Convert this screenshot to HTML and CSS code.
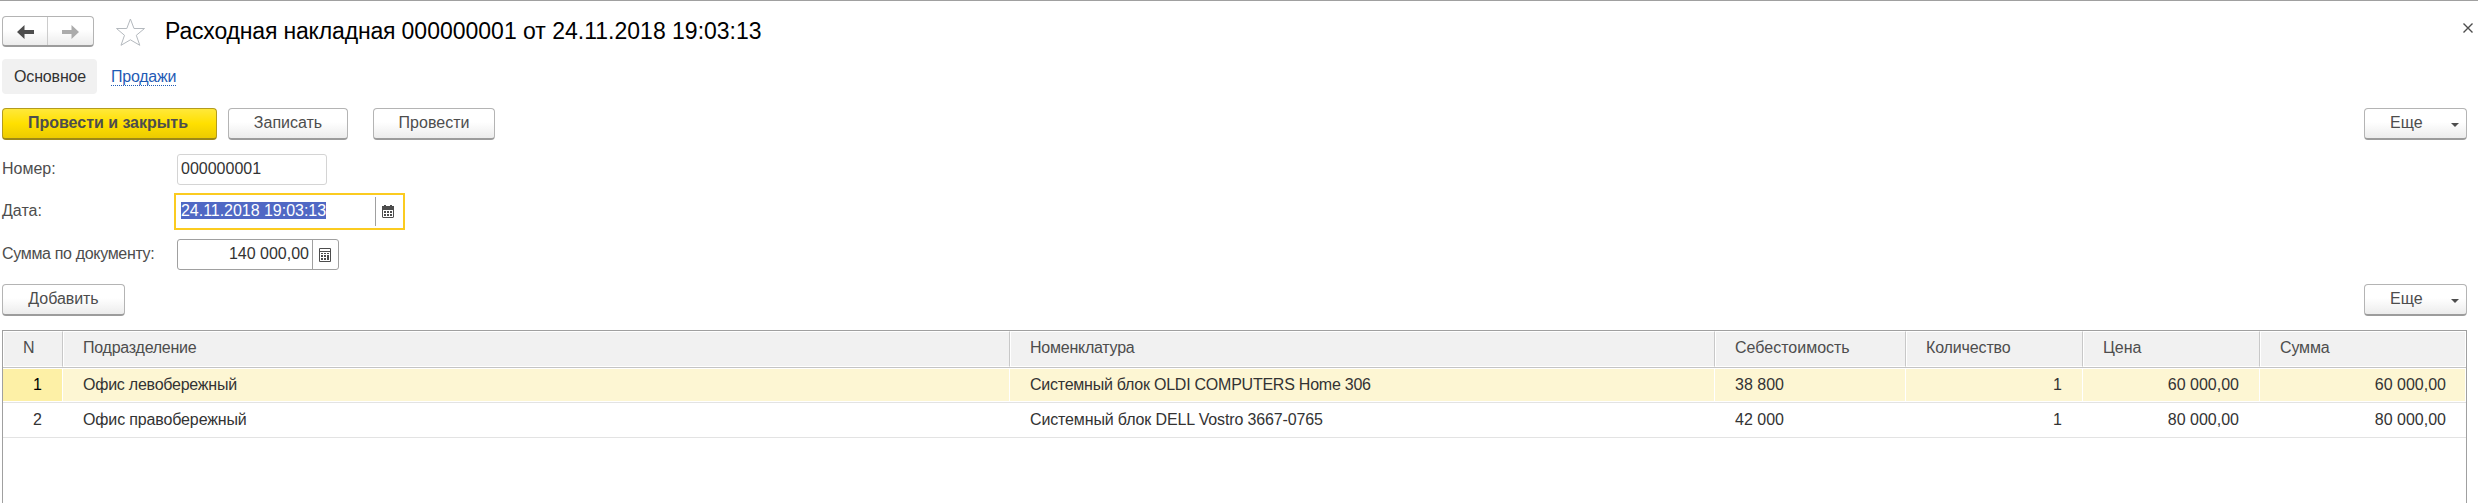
FILE: index.html
```html
<!DOCTYPE html>
<html lang="ru">
<head>
<meta charset="utf-8">
<title>Расходная накладная</title>
<link rel="stylesheet" href="styles.css">
</head>
<body>
<div class="window">
  <header class="titlebar">
    <div class="nav">
      <button class="nav-btn"><svg width="17" height="14" viewBox="0 0 17 14"><path d="M0 7 7.500 0V5H17V9H7.500V14Z" fill="#4d4d4d"/></svg></button>
      <button class="nav-btn"><svg width="17" height="14" viewBox="0 0 17 14"><path d="M17 7 9.500 0V5H0V9H9.500V14Z" fill="#ababab"/></svg></button>
    </div>
    <svg class="star" width="31" height="30" viewBox="0 0 31 30"><path d="M15.400 2 19 11.500H29.500L21.300 18.300 24.800 28.300 15.400 22.800 6 28.300 9.500 18.300 1.500 11.500H11.800Z" fill="#fff" stroke="#b4b9be"/></svg>
    <h1 class="title"><span class="t-name">Расходная накладная </span>000000001 от 24.11.2018 19:03:13</h1>
    <svg class="close" width="10" height="10" viewBox="0 0 10 10"><path d="M.5.5 9.500 9.500M9.500.5.5 9.500" stroke="#4d4d4d" stroke-width="1.400"/></svg>
  </header>
  <nav class="tabs">
    <span class="tab">Основное</span>
    <a class="link">Продажи</a>
  </nav>
  <div class="bar commands">
    <button class="btn primary">Провести и закрыть</button>
    <button class="btn save">Записать</button>
    <button class="btn post">Провести</button>
    <button class="btn more">Еще<i class="caret"></i></button>
  </div>
  <div class="form">
    <div class="row r-number"><label>Номер:</label><div class="input readonly"><span class="value">000000001</span></div></div>
    <div class="row r-date"><label>Дата:</label><div class="input focused"><span class="value"><mark>24.11.2018 19:03:13</mark></span><span class="pick"><svg width="12" height="13" viewBox="0 0 12 13"><path d="M0 1H2V0H4V1H8V0H10V1H12V12L11 13H1L0 12Z" fill="#4d4d4d"/><path d="M1 5H11V12H1Z" fill="#fff"/><path d="M2 6H4V8H2ZM5 6H7V8H5ZM8 6H10V8H8ZM2 9H4V11H2ZM5 9H7V11H5ZM8 9H10V11H8Z" fill="#4d4d4d"/></svg></span></div></div>
    <div class="row r-sum"><label>Сумма по документу:</label><div class="input sum"><span class="value">140 000,00</span><span class="pick"><svg width="12" height="14" viewBox="0 0 12 14"><path d="M.5.5H11.500V13.500H.5ZM.5 3.500H11.500" fill="#fff" stroke="#4d4d4d"/><path d="M2 5H4V6H2ZM5 5H7V6H5ZM8 5H10V6H8ZM2 7H4V9H2ZM5 7H7V9H5ZM2 10H4V12H2ZM5 10H7V12H5ZM8 7H10V12H8Z" fill="#4d4d4d"/></svg></span></div></div>
  </div>
  <div class="bar table-commands">
    <button class="btn add">Добавить</button>
    <button class="btn more">Еще<i class="caret"></i></button>
  </div>
  <div class="table">
    <div class="tr head">
      <div class="th">N</div><div class="th tight">Подразделение</div><div class="th tight">Номенклатура</div><div class="th">Себестоимость</div><div class="th snug">Количество</div><div class="th">Цена</div><div class="th snug">Сумма</div>
    </div>
    <div class="tr selected">
      <div class="td n">1</div><div class="td tight">Офис левобережный</div><div class="td tight">Системный блок OLDI COMPUTERS Home 306</div><div class="td">38 800</div><div class="td num">1</div><div class="td num">60 000,00</div><div class="td num">60 000,00</div>
    </div>
    <div class="tr">
      <div class="td n">2</div><div class="td snug">Офис правобережный</div><div class="td snug">Системный блок DELL Vostro 3667-0765</div><div class="td">42 000</div><div class="td num">1</div><div class="td num">80 000,00</div><div class="td num">80 000,00</div>
    </div>
  </div>
</div>
</body>
</html>
```
FILE: styles.css
```css
* { box-sizing: border-box; }
body { margin: 0; background: #fff; font: 16px/20px "Liberation Sans", Arial, sans-serif; color: #333; }
button { font: inherit; padding: 0; margin: 0; }
svg { display: block; flex: none; }
.window { height: 503px; border-top: 1px solid #a0a0a0; overflow: hidden; display: flex; flex-direction: column; padding-left: 2px; padding-right: 11px; white-space: nowrap; }
.titlebar { display: flex; height: 58px; padding-top: 15px; align-items: flex-start; flex: none; }
.nav { display: flex; width: 92px; height: 31px; border: 1px solid #b4b4b4; border-bottom: 2px solid #9c9c9c; border-radius: 4px; background: linear-gradient(#fff 45%, #ececec); }
.nav-btn { flex: 1; border: 0; background: none; display: flex; align-items: center; justify-content: center; padding-top: 2px; }
.nav-btn + .nav-btn { border-left: 1px solid #ccc; padding-right: 1px; }
.star { margin: 1px 0 0 21px; }
.title { margin: 2px 0 0 19px; font-size: 23px; line-height: 26px; font-weight: 400; color: #000; }
.t-name { letter-spacing: -.17px; white-space: pre; }
.close { margin: 7px -6px 0 auto; }
.tabs { display: flex; height: 49px; align-items: flex-start; flex: none; }
.tab { width: 95px; height: 35px; padding: 8px 0 0 12px; background: #f1f1f1; border-radius: 4px; letter-spacing: -.15px; }
.link { margin: 8px 0 0 14px; height: 19px; color: #1f5bb5; border-bottom: 1px dotted #1f5bb5; letter-spacing: -.25px; }
.bar { display: flex; height: 32px; flex: none; }
.btn { height: 32px; border: 1px solid #b4b4b4; border-bottom: 2px solid #9c9c9c; border-radius: 4px; background: linear-gradient(#fff 45%, #ececec); color: #4d4d4d; display: flex; align-items: center; justify-content: center; padding-bottom: 1px; }
.primary { width: 215px; padding-right: 3px; font-weight: 700; letter-spacing: -.03px; border-color: #b39b1e; border-bottom-color: #9c8818; background: linear-gradient(#ffe83a, #ffe000 50%, #eccb00); }
.save { width: 120px; margin-left: 11px; }
.post { width: 122px; margin-left: 25px; }
.more { width: 103px; margin-left: auto; justify-content: flex-start; padding-left: 25px; }
.caret { border: 4px solid transparent; border-top-color: #4d4d4d; border-bottom: 0; margin: 4px 7px 0 auto; }
.add { width: 123px; letter-spacing: -.05px; }
.form { height: 144px; flex: none; padding-top: 14px; color: #4d4d4d; }
.row { display: flex; align-items: center; }
.row label { width: 175px; padding-bottom: 1px; }
.input { display: flex; height: 31px; border: 1px solid #a0a0a0; border-radius: 3px; color: #333; align-items: center; }
.value { flex: 1; padding-bottom: 1px; }
.readonly { width: 150px; border-color: #d4d4d4; padding-left: 3px; }
.r-date { margin-top: 8px; }
.r-date label { width: 172px; }
.focused { width: 231px; height: 37px; border: 2px solid #fbcb20; border-radius: 0; padding: 2px; }
.focused .value { padding-left: 3px; letter-spacing: -.03px; }
mark { background: #5068c4; color: #fff; }
.pick { align-self: stretch; border-left: 1px solid #a0a0a0; width: 26px; padding-right: 1px; display: flex; align-items: center; justify-content: center; }
.r-sum { margin-top: 9px; }
.r-sum label { letter-spacing: -.33px; }
.sum { width: 162px; }
.sum .value { text-align: right; padding-right: 3px; }
.sum .pick { padding-top: 1px; }
.table { margin-top: 14px; flex: 1; border: 1px solid #a0a0a0; border-bottom: 0; }
.tr { display: grid; grid-template-columns: 60px 947px 705px 191px 177px 177px 1fr; height: 35px; border-bottom: 1px solid #e3e3e3; }
.head { height: 37px; border-bottom-color: #c4c4c4; color: #4d4d4d; }
.th, .td { padding: 7px 20px 0; border-right: 1px solid transparent; }
.th { border: 1px solid #fff; border-right-color: #c8c8c8; background: #f1f1f1; padding: 6px 0 0 19px; }
.th:last-child { border-right: 1px solid #fff; }
.td:last-child { padding-right: 19px; }
.tight { letter-spacing: -.24px; }
.snug { letter-spacing: -.14px; }
.selected .td { background: #fdf6d3; border-top: 1px solid #fff; border-bottom: 1px solid #fff; border-right-color: #fff; padding-top: 6px; }
.selected .n { background: #fdf0a6; color: #000; }
.n, .num { text-align: right; }
```
